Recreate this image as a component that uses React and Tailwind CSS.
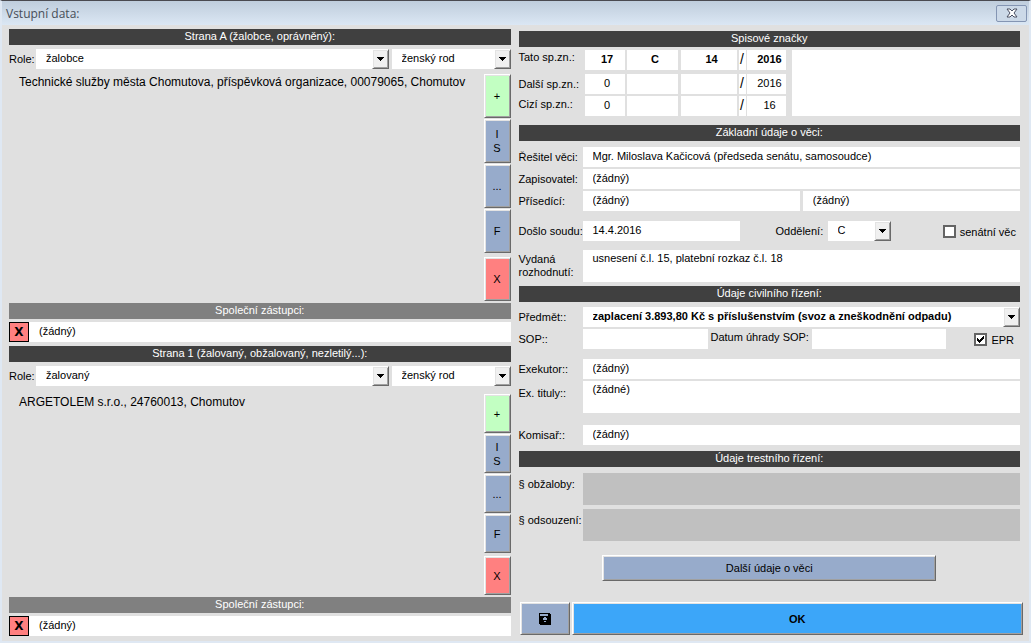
import React, { useState } from 'react';

const BEVEL =
  'border border-t-white border-l-white border-r-[#696969] border-b-[#696969] shadow-[inset_1px_1px_0_#e3e3e3,inset_-1px_-1px_0_#a0a0a0]';

function SectionHeader({ children, light }) {
  return (
    <h2 className={`h-4 text-center leading-[14px] text-white ${light ? 'bg-[#808080]' : 'bg-[#404040]'}`}>
      {children}
    </h2>
  );
}

function Dropdown({ id, label, value, className = '', textClass = 'pb-[2px]' }) {
  return (
    <div className={`relative h-5 bg-white ${className}`}>
      <select
        id={id}
        aria-label={label}
        defaultValue={value}
        className={`block h-full w-full appearance-none bg-white pl-[10px] pr-5 outline-none ${textClass}`}
      >
        <option>{value}</option>
      </select>
      <span className={`pointer-events-none absolute inset-y-0 right-0 flex w-[17px] items-center justify-center bg-[#f0f0f0] ${BEVEL}`}>
        <svg width="7" height="4" viewBox="0 0 7 4" shapeRendering="crispEdges">
          <path d="M0 0h7v1H6v1H5v1H4v1H3V3H2V2H1V1H0z" fill="#000" />
        </svg>
      </span>
    </div>
  );
}

function Field({ label, value = '', className = '', ...rest }) {
  return (
    <input
      aria-label={label}
      defaultValue={value}
      className={`block h-5 min-w-0 bg-white px-[10px] pb-[3px] outline-none ${className}`}
      {...rest}
    />
  );
}

function Row({ id, label, children, className = '' }) {
  return (
    <div className={`flex items-center ${className}`}>
      <label htmlFor={id} className="w-16 shrink-0 whitespace-nowrap">{label}</label>
      {children}
    </div>
  );
}

function Check({ label, checked }) {
  const [on, setOn] = useState(checked);
  return (
    <label className="flex items-center gap-1">
      <span className="relative block size-[13px]">
        <input
          type="checkbox"
          checked={on}
          onChange={(e) => setOn(e.target.checked)}
          className="block size-[13px] appearance-none border-2 border-[#646464] bg-white"
        />
        {on && (
          <svg className="pointer-events-none absolute inset-0" width="13" height="13" viewBox="0 0 13 13" shapeRendering="crispEdges">
            <path d="M3 5h1v1h1v1h1V6h1V5h1V4h1V3h1v3H9v1H8v1H7v1H6v1H5V9H4V8H3z" fill="#000" />
          </svg>
        )}
      </span>
      <span className="pt-[2px]">{label}</span>
    </label>
  );
}

const ACTIONS = [
  { text: '+', title: 'Přidat', color: 'bg-[#c2ffc2]' },
  { text: 'I S', title: 'IS', color: 'bg-[#97abcb]' },
  { text: '...', title: 'Více', color: 'bg-[#97abcb]' },
  { text: 'F', title: 'F', color: 'bg-[#97abcb]' },
  { text: 'X', title: 'Odebrat', color: 'bg-[#ff8080]' },
];

function Party({ id, title, role, gender, members, buttonClass, listClass }) {
  return (
    <section>
      <SectionHeader>{title}</SectionHeader>
      <div className="mt-1 flex items-center">
        <label htmlFor={id} className="w-[27px] shrink-0">Role:</label>
        <Dropdown id={id} value={role} className="flex-1" />
        <Dropdown label="Rod" value={gender} className="ml-[3px] w-[119px]" />
      </div>
      <div className={`flex ${listClass}`}>
        <ul className="flex-1 pl-[10px] text-[12px] leading-4">
          {members.map((m) => <li key={m}>{m}</li>)}
        </ul>
        <div className="flex w-[27px] flex-col gap-px">
          {ACTIONS.map((a) => (
            <button
              key={a.text}
              title={a.title}
              className={`px-2 leading-[14px] ${a.color} ${BEVEL} ${buttonClass}`}
            >
              {a.text}
            </button>
          ))}
        </div>
      </div>
      <div className="mt-[2px]">
        <SectionHeader light>Společní zástupci:</SectionHeader>
      </div>
      <div className="mt-[3px] flex">
        <button className="size-5 border border-black bg-[#ff8080] font-['DejaVu_Sans'] text-[12px] font-bold leading-none">X</button>
        <Field label="Společní zástupci" value="(žádný)" className="flex-1" />
      </div>
    </section>
  );
}

const CASE_ROWS = [
  { label: 'Tato sp.zn.:', cells: ['17', 'C', '14', '2016'], style: 'mb-1 font-bold', labelStyle: 'self-start' },
  { label: 'Další sp.zn.:', cells: ['0', '', '', '2016'], style: 'mb-[2px]', labelStyle: '' },
  { label: 'Cizí sp.zn.:', cells: ['0', '', '', '16'], style: '', labelStyle: 'pb-1' },
];

function CaseNumbers() {
  return (
    <div className="mt-[3px] flex leading-[14px]">
      <div className="shrink-0">
        {CASE_ROWS.map(({ label, cells, style, labelStyle }) => (
          <div key={label} className={`flex items-center ${style}`}>
            <span className={`w-[66px] font-normal ${labelStyle}`}>{label}</span>
            <Field label={`${label} senát`} value={cells[0]} className="w-10 pl-[15px] text-center" />
            <Field label={`${label} rejstřík`} value={cells[1]} className="ml-[2px] w-[51px] pl-4 text-center" />
            <Field label={`${label} číslo`} value={cells[2]} className="ml-[3px] w-14 pl-4 text-center" />
            <span className="ml-[2px] h-5 w-[7px] bg-white text-center text-[14px] font-normal leading-[18px]">/</span>
            <input
              aria-label={`${label} rok`}
              defaultValue={cells[3]}
              className="ml-px h-5 w-[39px] bg-white pb-[3px] pl-[7px] text-center outline-none"
            />
          </div>
        ))}
      </div>
      <textarea aria-label="Poznámka" className="ml-[6px] min-w-0 flex-1 resize-none bg-white outline-none" />
    </div>
  );
}

function CaseDetails() {
  return (
    <section>
      <SectionHeader>Spisové značky</SectionHeader>
      <CaseNumbers />

      <div className="mt-[9px]"><SectionHeader>Základní údaje o věci:</SectionHeader></div>
      <div className="mt-[6px] flex flex-col gap-[2px]">
        <Row id="resitel" label="Řešitel věci:">
          <Field id="resitel" value="Mgr. Miloslava Kačicová (předseda senátu, samosoudce)" className="flex-1" />
        </Row>
        <Row id="zapisovatel" label="Zapisovatel:">
          <Field id="zapisovatel" value="(žádný)" className="flex-1" />
        </Row>
        <Row id="prisedici" label="Přísedící:">
          <Field id="prisedici" value="(žádný)" className="flex-1" />
          <Field label="Druhý přísedící" value="(žádný)" className="ml-[3px] flex-1" />
        </Row>
      </div>

      <Row id="doslo" label="Došlo soudu:" className="mt-[10px]">
        <Field id="doslo" value="14.4.2016" className="w-[157px]" />
        <label htmlFor="oddeleni" className="ml-9 w-[52px]">Oddělení:</label>
        <Dropdown id="oddeleni" value="C" className="w-[63px]" />
        <div className="ml-auto mr-1"><Check label="senátní věc" checked={false} /></div>
      </Row>
      <Row id="rozhodnuti" label={<>Vydaná<br />rozhodnutí:</>} className="mt-[9px] leading-[13px]">
        <textarea
          id="rozhodnuti"
          defaultValue="usnesení č.l. 15, platební rozkaz č.l. 18"
          className="block h-8 min-w-0 flex-1 resize-none bg-white px-[10px] pt-[2px] outline-none"
        />
      </Row>

      <div className="mt-1"><SectionHeader>Údaje civilního řízení:</SectionHeader></div>
      <Row id="predmet" label="Předmět::" className="mt-[5px]">
        <Dropdown
          id="predmet"
          value="zaplacení 3.893,80 Kč s příslušenstvím (svoz a zneškodnění odpadu)"
          className="min-w-0 flex-1"
          textClass="font-bold pb-[2px]"
        />
      </Row>
      <Row id="sop" label="SOP::" className="mt-[2px] h-5">
        <Field id="sop" className="w-[125px]" />
        <label htmlFor="uhrada" className="ml-[3px] w-[101px] pb-1">Datum úhrady SOP:</label>
        <Field id="uhrada" className="w-[134px]" />
        <div className="ml-auto mr-[6px]"><Check label="EPR" checked /></div>
      </Row>
      <Row id="exekutor" label="Exekutor::" className="mt-[10px]">
        <Field id="exekutor" value="(žádný)" className="flex-1" />
      </Row>
      <Row id="tituly" label="Ex. tituly::" className="mt-[2px] items-start leading-6">
        <textarea
          id="tituly"
          defaultValue="(žádné)"
          className="block h-8 min-w-0 flex-1 resize-none bg-white px-[10px] pt-[2px] leading-[13px] outline-none"
        />
      </Row>
      <Row id="komisar" label="Komisař::" className="mt-3">
        <Field id="komisar" value="(žádný)" className="flex-1" />
      </Row>

      <div className="mt-[6px]"><SectionHeader>Údaje trestního řízení:</SectionHeader></div>
      <Row id="obzaloba" label="§ obžaloby:" className="mt-[6px] items-start leading-[22px]">
        <textarea id="obzaloba" disabled className="block h-8 min-w-0 flex-1 resize-none bg-[#c0c0c0]" />
      </Row>
      <Row id="odsouzeni" label="§ odsouzení:" className="mt-1 items-start leading-[22px]">
        <textarea id="odsouzeni" disabled className="block h-8 min-w-0 flex-1 resize-none bg-[#c0c0c0]" />
      </Row>

      <button className={`mx-auto mt-[14px] block h-[26px] w-2/3 bg-[#97abcb] ${BEVEL}`}>Další údaje o věci</button>
      <div className="-mr-[3px] mt-[21px] flex gap-[2px] pl-px">
        <button aria-label="Uložit" className={`flex h-[33px] w-[50px] items-center justify-center bg-[#97abcb] ${BEVEL}`}>
          <svg width="12" height="12" viewBox="0 0 12 12" shapeRendering="crispEdges">
            <path d="M0 0h11v1h1v11H1v-1H0z" fill="#000" />
            <path d="M1 1h8v2H1z" fill="#97abcb" />
            <path d="M5 4h2v1h1v2H7v2H5V7H4V5h1z" fill="#97abcb" />
            <path d="M5 7h2v1H5z" fill="#000" />
          </svg>
        </button>
        <button className={`h-[33px] flex-1 bg-[#3ca6f9] font-bold ${BEVEL}`}>OK</button>
      </div>
    </section>
  );
}

export default function App() {
  return (
    <div className="min-h-screen border-x-2 border-b-2 border-t border-x-[#dfe8f3] border-b-[#dfe8f3] border-t-[#4a4a50] bg-[#e0e0e0] font-['Liberation_Sans',Arial,sans-serif] text-[11px] leading-4 text-black">
      <header className="flex h-6 items-center justify-between bg-linear-to-b from-[#bfcddc] to-[#dbe7f4] pl-1 pr-[2px]">
        <h1 className="pt-[2px] font-['Open_Sans','Noto_Sans',sans-serif] text-[12px] text-[#474e58]">Vstupní data:</h1>
        <button aria-label="Zavřít" className="flex h-[17px] w-[31px] items-center justify-center rounded-xs border border-[#8495b3] bg-[#ccd9e8]">
          <svg width="12" height="10" viewBox="0 0 12 10">
            <path d="M1 1h3l2 2 2-2h3L8 5l3 4H8L6 7 4 9H1l3-4z" fill="#fff" stroke="#4b5063" />
          </svg>
        </button>
      </header>
      <main className="flex gap-2 pl-[7px] pr-[9px] pt-1">
        <div className="min-w-0 flex-1">
          <Party
            id="role-a"
            title="Strana A (žalobce, oprávněný):"
            role="žalobce"
            gender="ženský rod"
            members={['Technické služby města Chomutova, příspěvková organizace, 00079065, Chomutov']}
            buttonClass="h-11 last:mt-[3px]"
            listClass="mt-[5px]"
          />
          <div className="mt-1">
            <Party
              id="role-1"
              title="Strana 1 (žalovaný, obžalovaný, nezletilý...):"
              role="žalovaný"
              gender="ženský rod"
              members={['ARGETOLEM s.r.o., 24760013, Chomutov']}
              buttonClass="h-[39px] last:mt-[2px]"
              listClass="mt-2"
            />
          </div>
        </div>
        <div className="min-w-0 flex-1 pt-[2px]">
          <CaseDetails />
        </div>
      </main>
    </div>
  );
}
